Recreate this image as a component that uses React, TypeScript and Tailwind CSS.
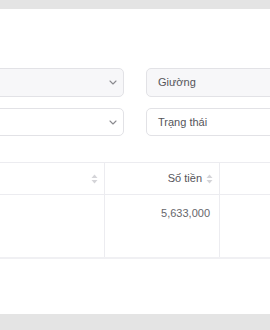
const SortIcon = () => (
  <svg width="7" height="10" viewBox="0 0 7 10" className="shrink-0">
    <path d="M3.5 0.5 L6.5 4 L0.5 4 Z" fill="#d4d4d8" />
    <path d="M3.5 9.5 L6.5 6 L0.5 6 Z" fill="#d4d4d8" />
  </svg>
);

const Chevron = () => (
  <svg width="8" height="5" viewBox="0 0 8 5" className="shrink-0">
    <path d="M1 1 L4 4 L7 1" stroke="#8a8a8f" strokeWidth="1.1" fill="none" strokeLinecap="round" strokeLinejoin="round" />
  </svg>
);

export default function App() {
  return (
    <div
      className="w-[270px] h-[330px] overflow-hidden bg-[#e4e4e4] flex flex-col"
      style={{ fontFamily: '"Helvetica Neue", "Liberation Sans", Arial, sans-serif' }}
    >
      <div className="h-[9px] shrink-0" />
      <div className="h-[305px] shrink-0 bg-white overflow-hidden pt-[59px]">
        {/* filters */}
        <div className="-ml-[60px] w-[400px] flex flex-col gap-[11px]">
          <div className="flex gap-[22px]">
            <div className="w-[184px] shrink-0 h-[29px] rounded-[5px] border border-[#e2e2e6] bg-[#f7f7f9] flex items-center justify-end pr-[6px]">
              <Chevron />
            </div>
            <div className="w-[160px] shrink-0 h-[29px] rounded-[5px] border border-[#e2e2e6] bg-[#f7f7f9] flex items-center pl-[11px] text-[11px] text-[#55555a]">
              Giường
            </div>
          </div>
          <div className="flex gap-[22px]">
            <div className="w-[184px] shrink-0 h-[28px] rounded-[5px] border border-[#e2e2e6] bg-white flex items-center justify-end pr-[6px]">
              <Chevron />
            </div>
            <div className="w-[160px] shrink-0 h-[28px] rounded-[5px] border border-[#e2e2e6] bg-white flex items-center pl-[11px] text-[11px] text-[#55555a]">
              Trạng thái
            </div>
          </div>
        </div>

        {/* table */}
        <div className="mt-[26px] -ml-[60px] w-[400px] border-t border-[#ececf0]">
          <div className="flex h-[32px] border-b border-[#ececf0] text-[11px] text-[#55555a]">
            <div className="w-[165px] shrink-0 border-r border-[#ececf0] flex items-center justify-end pr-[6px]">
              <SortIcon />
            </div>
            <div className="w-[115px] shrink-0 border-r border-[#ececf0] flex items-center justify-end gap-[4px] pr-[6px]">
              <span>Số tiền</span>
              <SortIcon />
            </div>
            <div className="flex-1" />
          </div>
          <div className="flex h-[64px] border-b-2 border-[#f0f0f3] text-[11px] text-[#66666b]">
            <div className="w-[165px] shrink-0 border-r border-[#ececf0]" />
            <div className="w-[115px] shrink-0 border-r border-[#ececf0] flex justify-end pr-[9px] pt-[10px]">
              5,633,000
            </div>
            <div className="flex-1" />
          </div>
        </div>
      </div>
      <div className="flex-1" />
    </div>
  );
}
